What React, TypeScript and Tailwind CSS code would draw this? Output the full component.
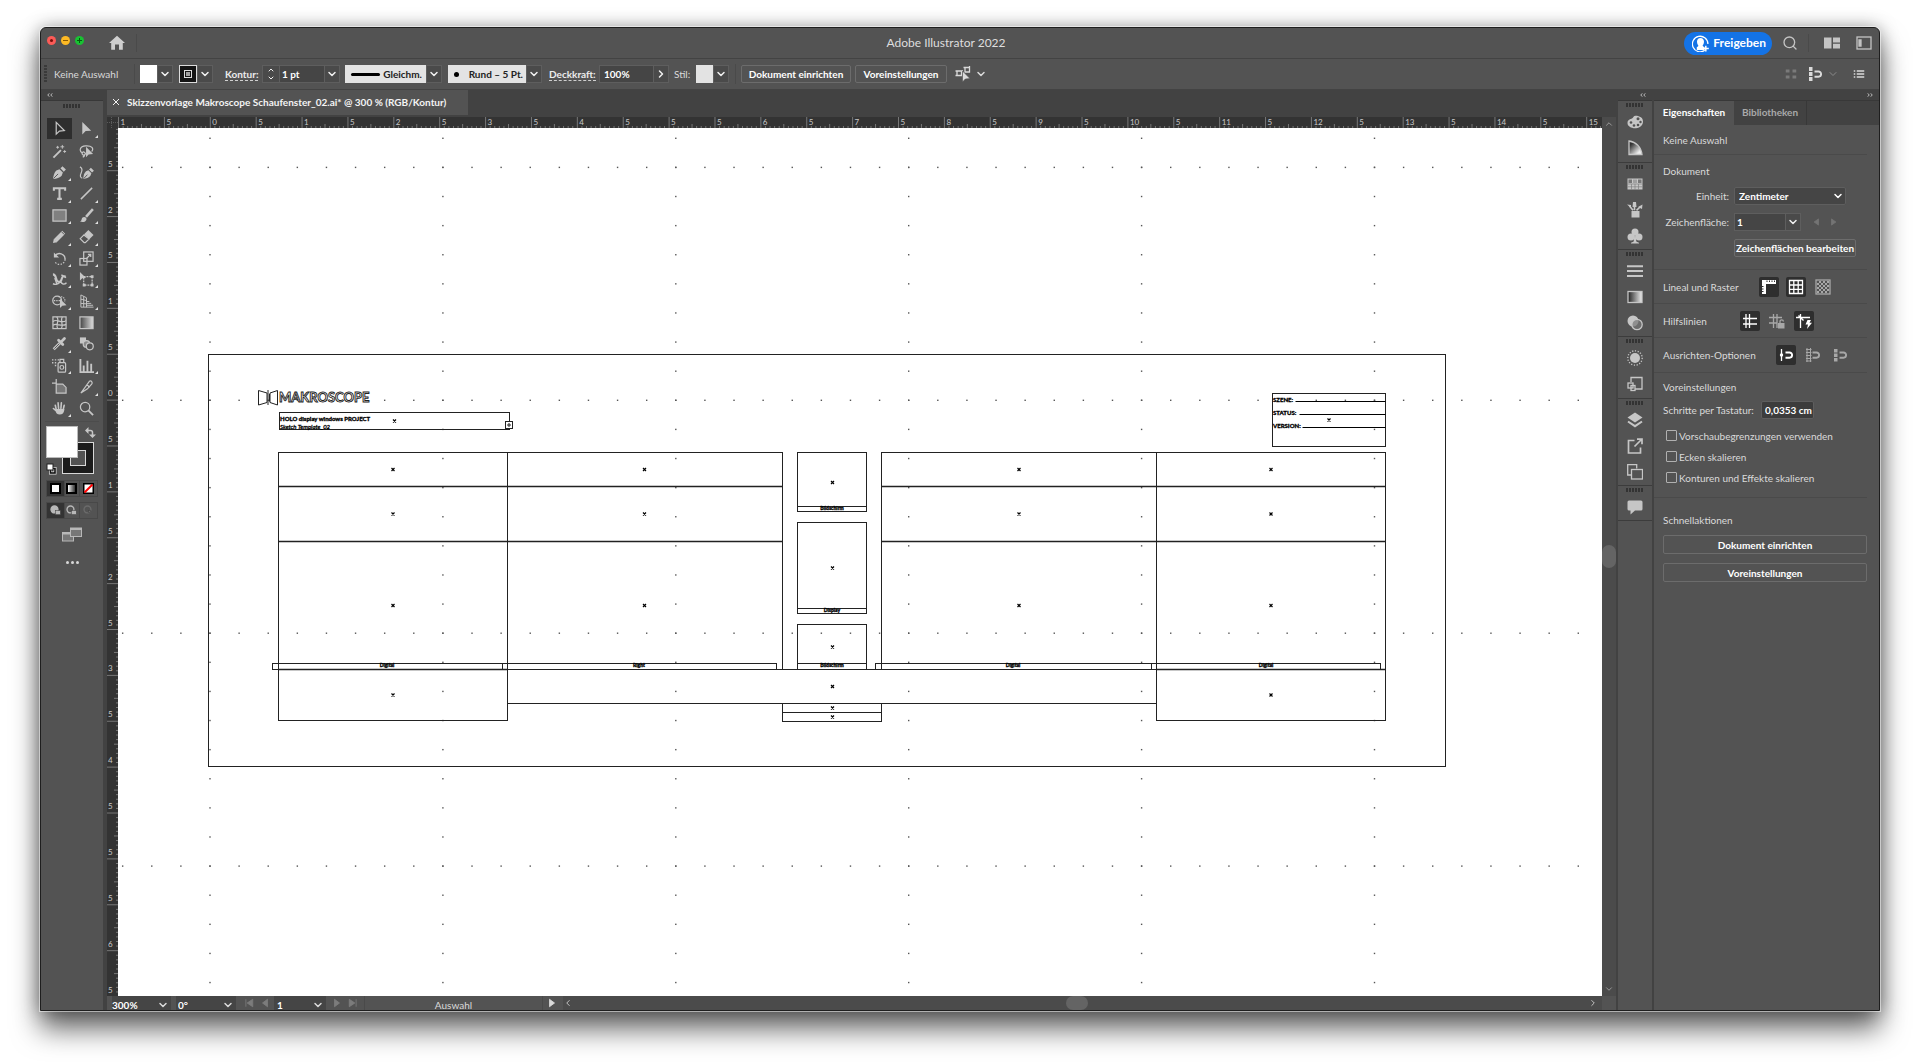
import React from "react";
import clsx from "clsx";
import { ChevronDown, ChevronRight, ChevronLeft, ChevronUp, Search } from "lucide-react";

type IconProps = { children: React.ReactNode; className?: string };

const Icon = ({ children, className }: IconProps) => (
  <svg
    viewBox="0 0 16 16"
    className={clsx("shrink-0", className ?? "size-4")}
    fill="none"
    stroke="currentColor"
    strokeWidth="1.3"
    aria-hidden="true"
  >
    {children}
  </svg>
);

/* ---------- icons ---------- */

const magnet = <path d="M7.500 5.500h4a2.600 2.600 0 0 1 0 5.200h-4" strokeWidth="1.9" />;

const tools: { name: string; more?: boolean; art: React.ReactNode }[] = [
  { name: "Auswahl", art: <path d="M4.5 1.5v12.5l3.4-3.2 5.3-.6z" /> },
  { name: "Direktauswahl", more: true, art: <path d="M3.5 1v13.5l3.6-3.8 5.9-.4z" fill="currentColor" stroke="none" /> },
  {
    name: "Zauberstab",
    art: (
      <>
        <path d="M1.5 14.5 9.5 6.5" strokeWidth="2" />
        <path d="M11 1v4M9 3h4M13.5 6.5v3M12 8h3M6 2v3M4.5 3.5h3" strokeWidth="1" />
      </>
    ),
  },
  {
    name: "Lasso",
    art: (
      <>
        <path d="M3.5 9.5C0 7.5.5 2.500 7 2c7-.5 9 3 6.500 6M3.500 9.500c-1 2 2 3 3 1.500S4.500 7 3.500 9.500zM6 11c.5 1-.5 2.500-2 3" />
        <path d="M7.500 3v11l2.700-2.900 4.800-.4z" fill="currentColor" stroke="none" />
      </>
    ),
  },
  {
    name: "Zeichenstift",
    more: true,
    art: (
      <>
        <path d="M1 15c.6-4 1.500-7.500 3.600-9.200L8 4.500l3.600 3.600-1.300 3.300C8.500 13.500 5 14.500 1 15z" fill="currentColor" stroke="none" />
        <path d="M9 3.500 11.200 1.300l3.600 3.600-2.200 2.200z" fill="currentColor" stroke="none" />
        <path d="M1.500 14.500 6.500 9.500" stroke="#535353" strokeWidth="1" />
      </>
    ),
  },
  {
    name: "Kurvenzeichner",
    art: (
      <>
        <path d="M1 2c3 1.500 2.500 4 1.300 6.500S1 13.500 3.500 14" />
        <path d="M4.500 15c.3-4 1-6.500 3-8.300l2.500-1 3.200 3.200-1 2.600C10.500 13.500 8 14.500 4.500 15zM10.700 4.800l2-2 3.200 3.200-2 2z" fill="currentColor" stroke="none" />
        <path d="M5 14.500 9 10.300" stroke="#535353" strokeWidth="1" />
      </>
    ),
  },
  { name: "Text", more: true, art: <path d="M2 5V2.300h12V5M8 2.300v11.400M5.500 13.700h5" strokeWidth="2.200" /> },
  { name: "Liniensegment", more: true, art: <path d="M2 14 14 2" strokeWidth="1.600" /> },
  { name: "Rechteck", more: true, art: <rect x="1" y="2" width="14" height="12" fill="#808080" /> },
  {
    name: "Pinsel",
    more: true,
    art: (
      <>
        <path d="M1 14.500c2-.5 1.500-2.500 2.500-4 1-1.300 3-1.300 4 0s.5 3-1 3.800-3.500.7-5.500.2z" fill="currentColor" stroke="none" />
        <path d="M7.500 9.500 14.800 1.200" strokeWidth="2.600" />
      </>
    ),
  },
  {
    name: "Buntstift",
    more: true,
    art: (
      <>
        <path d="M3.500 12.500 12.500 3.500" strokeWidth="4.500" />
        <path d="M1 15l1-4.500L5.500 14z" fill="currentColor" stroke="none" />
        <path d="m10 2.800 3.200 3.200" stroke="#535353" strokeWidth="1" />
      </>
    ),
  },
  {
    name: "Radiergummi",
    more: true,
    art: (
      <>
        <path d="M5.500 5.500 10 1l5.500 5.500-4.500 4.500z" fill="currentColor" stroke="none" />
        <path d="m5.300 6.300-4 4 4.200 4.200h1.200l4-3.800z" />
      </>
    ),
  },
  {
    name: "Drehen",
    more: true,
    art: (
      <>
        <path d="M3 5.500a6 6 0 0 1 11 3.500" strokeWidth="1.600" />
        <path d="M14 9A6 6 0 0 1 3 11.500" strokeDasharray="1.500 1.500" />
        <path d="M2 1.500V7h5.500z" fill="currentColor" stroke="none" />
      </>
    ),
  },
  {
    name: "Skalieren",
    more: true,
    art: (
      <>
        <rect x="1" y="8" width="7.500" height="7" />
        <rect x="5" y="1" width="10" height="10" />
        <path d="m8 8 4.500-4.500M9.500 3.500h3v3" />
      </>
    ),
  },
  {
    name: "Breite",
    more: true,
    art: (
      <>
        <path d="M1 2.500c4 0 2.500 6 5 7.500s4-.5 4.500-3S13 4 14.500 5" strokeWidth="2.200" />
        <path d="M1 12.500c4 1.500 7-.5 8-2.500 1.500 3 4 4 6.500 1.500M3 6.500l2.500 7M10 3l5 3" strokeWidth="1.500" />
      </>
    ),
  },
  {
    name: "Frei transformieren",
    more: true,
    art: (
      <>
        <rect x="5" y="5" width="9" height="9" strokeDasharray="2 1" />
        <path d="M1 0v9l2.500-2.300 4-.4zM12.500 3.500h3v3h-3zM12.500 12.500h3v3h-3zM4 12.500h3v3H4z" fill="currentColor" stroke="none" />
      </>
    ),
  },
  {
    name: "Formerstellung",
    more: true,
    art: (
      <>
        <circle cx="5.500" cy="7" r="4.700" />
        <path d="M7 3.200c5-1.200 7.500 1.800 6.500 5.300M2 7h8" strokeDasharray="1.500 1" />
        <path d="M8.500 5v10l2.500-2.600 4.500-.4z" fill="currentColor" stroke="none" />
      </>
    ),
  },
  {
    name: "Perspektivenraster",
    more: true,
    art: <path d="M2 1v13h13.500M2 1l6 3v10M2 5.500l6 1.500M2 10l6 .5M5 2.500V14M8 8h3M8 10h5M8 12h7" strokeWidth="1" />,
  },
  {
    name: "Gitter",
    art: (
      <>
        <rect x="1" y="2" width="14" height="12.500" />
        <path d="M1 7c4-4 9 3 14-1M1 11c4-3 9 2 14-1M5 2c4 4-2 8 1 12.500M11 2c-3 4 2 8-1 12.500" />
      </>
    ),
  },
  {
    name: "Verlauf",
    art: (
      <>
        <defs>
          <linearGradient id="toolGrad">
            <stop offset="0" stopColor="#444" />
            <stop offset="1" stopColor="#ddd" />
          </linearGradient>
        </defs>
        <rect x="1" y="2" width="14" height="12.500" fill="url(#toolGrad)" />
      </>
    ),
  },
  {
    name: "Pipette",
    more: true,
    art: (
      <>
        <path d="M1.800 14.200 8.500 7.500" strokeWidth="3" />
        <path d="M2.500 13.500 8 8" stroke="#535353" strokeWidth="1" />
        <path d="m7 4.500 4.500 4.500M10 6l3.300-3.300" strokeWidth="3" strokeLinecap="round" />
      </>
    ),
  },
  {
    name: "Angleichen",
    art: (
      <>
        <rect x="1" y="1.500" width="6.500" height="6.500" fill="currentColor" stroke="none" />
        <circle cx="8" cy="8.500" r="3.500" fill="#8a8a8a" />
        <circle cx="11.500" cy="11" r="3.700" fill="#535353" />
      </>
    ),
  },
  {
    name: "Symbol aufsprühen",
    more: true,
    art: (
      <>
        <rect x="6.500" y="5" width="8" height="10" rx="1" />
        <path d="M8.500 4.500v-3h4v3" />
        <circle cx="10.500" cy="10" r="2" />
        <path d="M0 2h1.500M3 2h1.500M6 2h1.500M0 5h1.500M3 5h1.500M3 8h1.500" strokeWidth="1.500" />
      </>
    ),
  },
  { name: "Säulendiagramm", more: true, art: <path d="M1.500 1v14H16M5 14V8M9 14V3M13 14V6" strokeWidth="2" /> },
  { name: "Zeichenfläche", art: <path d="M4.500 0v5M0 4.500h4.500M4.500 5.500h7L15 9v6H4.500z" fill="#777" /> },
  {
    name: "Slice",
    more: true,
    art: <path d="M2 15 11 2.500c2-1.500 4 1 2.500 3L9 10.500 2 15zM8.500 6l3 3" />,
  },
  {
    name: "Hand",
    more: true,
    art: (
      <path
        d="M4.500 9 3.500 4.500M7 8 6.500 2M9.500 8 10 2M12 9l1-4.500M4.500 10.500l-3-2.500M4.500 9.500c.5 5.500 7 5.500 7.800 0z"
        strokeWidth="1.700"
        strokeLinecap="round"
        fill="currentColor"
      />
    ),
  },
  {
    name: "Zoom",
    art: (
      <>
        <circle cx="6.500" cy="6.500" r="5" />
        <path d="m10 10 5 5" strokeWidth="2" />
      </>
    ),
  },
];

const dockGroups: { name: string; art: React.ReactNode }[][] = [
  [
    {
      name: "Farbe",
      art: (
        <>
          <path d="M8.500 1.800c-2 0-2 2-3.500 2.700S.5 5.500.5 9s4 5.500 8.500 5.200S16 11 16 7.500 13 1.800 8.500 1.800z" fill="currentColor" stroke="none" />
          <g fill="#535353" stroke="none">
            <circle cx="4" cy="8.500" r="1.300" />
            <circle cx="7" cy="11.500" r="1.300" />
            <circle cx="11" cy="11" r="1.300" />
            <circle cx="13.500" cy="8" r="1.200" />
            <circle cx="11" cy="4.800" r="1.500" />
          </g>
        </>
      ),
    },
    {
      name: "Farbhilfe",
      art: (
        <>
          <defs>
            <linearGradient id="guideGrad" x1="0" y1="0" x2="1" y2="1">
              <stop offset="0.200" stopColor="#333" />
              <stop offset="0.800" stopColor="#eee" />
            </linearGradient>
          </defs>
          <path d="M2 1c7 1 12 6 13 13.500H2z" fill="url(#guideGrad)" />
        </>
      ),
    },
  ],
  [
    {
      name: "Farbfelder",
      art: (
        <>
          <rect x="0.500" y="2.500" width="15" height="11" fill="currentColor" stroke="none" />
          <path d="M1.500 3.500H5V7H1.500zM11 3.500h3.500V7H11z" fill="#777" stroke="none" />
          <path d="M6 3.500h4V7H6z" fill="#a0a0a0" stroke="none" />
          <path d="M.5 8h15M.5 10.800h15M4.500 8v5.500M8 8v5.500M11.500 8v5.500" stroke="#808080" strokeWidth="0.700" />
        </>
      ),
    },
    {
      name: "Pinsel",
      art: (
        <>
          <rect x="4.500" y="9" width="8" height="6.500" fill="currentColor" stroke="none" />
          <path d="M7.500 8.300V1.500M6 8.300 2.500 4M9.500 8.300 13 5" strokeWidth="1.600" />
          <path d="M0 2.500 4 3v3zM11 5l4.500-2.500L15 7zM6 0h3l.5 5h-4z" fill="currentColor" stroke="none" />
        </>
      ),
    },
    {
      name: "Symbole",
      art: (
        <g fill="currentColor" stroke="none">
          <circle cx="8" cy="4" r="3.500" />
          <circle cx="4" cy="9" r="3.500" />
          <circle cx="12" cy="9" r="3.500" />
          <path d="M7.300 7h1.400l.6 6.500 2.700 1.300v.7H4v-.7l2.700-1.300z" />
        </g>
      ),
    },
  ],
  [
    {
      name: "Kontur",
      art: <path d="M0 3.200h16M0 8h16M0 13h16" strokeWidth="2.100" />,
    },
    {
      name: "Verlauf",
      art: (
        <>
          <defs>
            <linearGradient id="dockGrad">
              <stop offset="0" stopColor="#222" />
              <stop offset="1" stopColor="#eee" />
            </linearGradient>
          </defs>
          <rect x="1" y="2.500" width="14" height="11" fill="url(#dockGrad)" />
        </>
      ),
    },
    {
      name: "Transparenz",
      art: (
        <>
          <circle cx="6" cy="6" r="5.500" fill="currentColor" stroke="none" />
          <circle cx="10" cy="9.500" r="5.200" fill="#777" fillOpacity="0.700" />
        </>
      ),
    },
  ],
  [
    {
      name: "Aussehen",
      art: (
        <>
          <circle cx="8" cy="8" r="5" fill="currentColor" stroke="none" />
          <circle cx="8" cy="8" r="7.200" strokeDasharray="1.200 1.600" />
        </>
      ),
    },
    {
      name: "Grafikstile",
      art: (
        <>
          <path d="M4 6V1.500h11v11.500H8" />
          <rect x="1" y="7" width="5" height="5" />
          <rect x="4" y="9.500" width="4" height="5" />
        </>
      ),
    },
  ],
  [
    {
      name: "Ebenen",
      art: (
        <>
          <path d="m8 .5 7.500 5L8 10.500.5 5.500z" fill="currentColor" stroke="none" />
          <path d="m1 9.500 7 4.700 7-4.700" strokeWidth="2" />
        </>
      ),
    },
    {
      name: "Exportieren",
      art: <path d="M7.500 2.500H1.500v12.500h12V9.500M7.500 8.500 14.500 1.500M10 1.200h5v5" strokeWidth="1.700" />,
    },
    {
      name: "Zeichenflächen",
      art: (
        <>
          <path d="M4 11H.7V.7h9V4.500" />
          <rect x="4.500" y="5.500" width="11" height="9.500" />
        </>
      ),
    },
  ],
  [
    {
      name: "Kommentare",
      art: (
        <path
          d="M2 1.500h12a1.500 1.500 0 0 1 1.500 1.500v7a1.500 1.500 0 0 1-1.500 1.500H8L3.500 15.500v-4H2A1.500 1.500 0 0 1 .5 10V3A1.500 1.500 0 0 1 2 1.500z"
          fill="currentColor"
          stroke="none"
        />
      ),
    },
  ],
];

/* ---------- small parts ---------- */

const Grip = () => (
  <div className="h-1 w-[18px] bg-[repeating-linear-gradient(90deg,#333_0_2px,#535353_2px_3px)]" />
);

const DropButton = ({ label, right }: { label: string; right?: boolean }) => (
  <button
    aria-label={label}
    className="flex h-[18px] w-4 shrink-0 items-center justify-center border border-[#5e5e5e] bg-[#4a4a4a] text-[#f0f0f0]"
  >
    {right ? <ChevronRight className="size-3" strokeWidth={3} /> : <ChevronDown className="size-3" strokeWidth={3} />}
  </button>
);

const OutlineButton = ({ children, className }: IconProps) => (
  <button
    className={clsx(
      "flex shrink-0 items-center justify-center rounded-xs border border-[#6c6c6c] font-bold whitespace-nowrap text-white",
      className
    )}
  >
    {children}
  </button>
);

const Divider = () => <div className="mr-3 h-px bg-[#4a4a4a]" />;

const PanelHeader = ({ children, className }: IconProps) => (
  <div
    className={clsx(
      "flex h-[11px] shrink-0 items-center border-b border-[#383838] bg-[#424242] text-[#c8c8c8]",
      className
    )}
  >
    <svg viewBox="0 0 6 4" className="h-1 w-1.5" fill="none" stroke="currentColor" strokeWidth="0.900">
      {children}
    </svg>
  </div>
);

/* ---------- bars ---------- */

const TitleBar = () => (
  <header className="grid h-[31px] shrink-0 grid-cols-[1fr_auto_1fr] items-center border-b border-[#434343]">
    <div className="flex items-center">
      <div className="ml-1.5 flex gap-[5px] self-start pt-0.5">
        <button aria-label="Schließen" className="flex size-[9px] items-center justify-center rounded-full bg-[#fc5b57]">
          <span className="size-[3px] rounded-full bg-[#7a0f0c]" />
        </button>
        <button aria-label="Minimieren" className="flex size-[9px] items-center justify-center rounded-full bg-[#fdb924]">
          <span className="h-px w-[5px] bg-[#8a5a00]" />
        </button>
        <button aria-label="Maximieren" className="flex size-[9px] items-center justify-center rounded-full bg-[#18c232]">
          <svg viewBox="0 0 5 5" className="size-[5px]" stroke="#055c10" fill="none">
            <path d="M2.500 0v5M0 2.500h5" />
          </svg>
        </button>
      </div>
      <button aria-label="Start" className="ml-[25px] text-[#cfcfcf]">
        <Icon>
          <path d="M8 .8 16 8h-2.200v6.800H10V9.500H6v5.300H2.200V8H0z" fill="currentColor" stroke="none" />
        </Icon>
      </button>
      <div className="ml-[11px] h-[18px] w-px bg-[#4a4a4a]" />
    </div>
    <h1 className="pr-7 text-xs text-[#dedede]">Adobe Illustrator 2022</h1>
    <div className="flex items-center justify-end pr-[7px] text-[#c4c4c4]">
      <button className="flex h-[23px] items-center gap-1 rounded-full bg-[#1473e6] pr-1.5 pl-2 text-xs font-bold text-white">
        <Icon className="size-[17px]">
          <path d="M12 14.400A7.300 7.300 0 1 1 15 8.500" strokeWidth="1.200" />
          <path
            d="M8 2.800c2 0 3.300 1.400 3.300 3.500S10 9.700 10 10.200s1 .8 1.800 1.200V14H4.500v-2.500C5.500 11 6 10.700 6 10.200S4.700 8.400 4.700 6.300 6 2.800 8 2.800z"
            fill="currentColor"
            stroke="none"
          />
          <path d="M13 10v5.500M10.300 12.800h5.500" strokeWidth="1.400" />
        </Icon>
        Freigeben
      </button>
      <button aria-label="Suchen" className="ml-2.5">
        <Search className="size-4" />
      </button>
      <div className="ml-2.5 h-[18px] w-px bg-[#4a4a4a]" />
      <button aria-label="Arbeitsbereich" className="ml-[15px]">
        <Icon>
          <path d="M0 2.500h7.500v11H0zM9 2.500h7v5H9zM9 8.800h7v4.700H9z" fill="currentColor" stroke="none" />
        </Icon>
      </button>
      <button aria-label="Dokumente anordnen" className="ml-4">
        <Icon>
          <rect x="1" y="2" width="14" height="12" />
          <path d="M3 5h2v6H3z" fill="currentColor" />
        </Icon>
      </button>
    </div>
  </header>
);

const ControlBar = () => (
  <div className="flex h-[31px] shrink-0 items-center overflow-hidden border-b border-[#434343] text-[#dadada]">
    <div className="ml-[3px] h-[18px] w-[3px] shrink-0 bg-[repeating-linear-gradient(180deg,#3a3a3a_0_2px,#535353_2px_3px)]" />
    <span className="ml-[7px] w-20 shrink-0">Keine Auswahl</span>
    <div className="h-5 w-px shrink-0 bg-[#4a4a4a]" />
    <button aria-label="Fläche" className="ml-[5px] h-[18px] w-[17px] shrink-0 bg-white" />
    <DropButton label="Flächenfarbe" />
    <button
      aria-label="Konturfarbe"
      className="ml-1.5 flex h-[18px] w-[18px] shrink-0 items-center justify-center border border-[#dcdcdc] bg-[#141414]"
    >
      <span className="flex size-2 items-center justify-center border border-[#dcdcdc]">
        <span className="size-1 bg-[#a0a0a0]" />
      </span>
    </button>
    <DropButton label="Konturfarbe wählen" />
    <label htmlFor="stroke" className="ml-3 w-[37px] shrink-0">
      <span className="border-b border-dashed border-[#cfcfcf] font-bold text-[#ececec]">Kontur:</span>
    </label>
    <div className="flex h-[18px] shrink-0 border border-r-0 border-[#5e5e5e] bg-[#454545]">
      <span className="flex w-4 flex-col items-center justify-center bg-[#4a4a4a] text-[#f0f0f0]">
        <ChevronUp className="size-2" strokeWidth={3} />
        <ChevronDown className="size-2" strokeWidth={3} />
      </span>
      <input
        id="stroke"
        defaultValue="1 pt"
        className="w-[45px] border-l border-[#5e5e5e] pl-0.5 text-[10px] font-bold text-white"
      />
    </div>
    <DropButton label="Konturstärke" />
    <button className="ml-[5px] flex h-[18px] w-[81px] shrink-0 items-center justify-between bg-[#e3e3e3] px-1 pl-1.5 font-bold text-[#222]">
      <span className="h-[3px] w-[29px] rounded-full bg-black" />
      Gleichm.
    </button>
    <DropButton label="Breitenprofil" />
    <button className="ml-1.5 flex h-[18px] w-[78px] shrink-0 items-center justify-between bg-[#e3e3e3] pr-[3px] pl-1.5 font-bold text-[#222]">
      <span className="size-[5px] rounded-full bg-black" />
      Rund – 5 Pt.
    </button>
    <DropButton label="Pinseldefinition" />
    <label htmlFor="opacity" className="ml-[7px] w-[50px] shrink-0">
      <span className="border-b border-dashed border-[#cfcfcf] font-bold text-[#ececec]">Deckkraft:</span>
    </label>
    <input
      id="opacity"
      defaultValue="100%"
      className="h-[18px] w-[54px] shrink-0 border border-r-0 border-[#5e5e5e] bg-[#454545] pl-1 font-bold text-white"
    />
    <DropButton label="Deckkraft wählen" right />
    <span className="ml-[5px] w-[22px] shrink-0">Stil:</span>
    <button aria-label="Stil" className="h-[18px] w-[17px] shrink-0 bg-[#e3e3e3]" />
    <DropButton label="Stil wählen" />
    <div className="ml-1.5 h-5 w-px shrink-0 bg-[#4a4a4a]" />
    <OutlineButton className="ml-[5px] h-[18px] w-[110px]">Dokument einrichten</OutlineButton>
    <OutlineButton className="ml-1 h-[18px] w-[92px]">Voreinstellungen</OutlineButton>
    <button aria-label="Ähnliche auswählen" className="ml-2 flex items-center gap-1">
      <Icon>
        <path d="M2 5h4.500v4.500H2zM10 1.500h4.500V6H10zM.5 5h1.500M.5 9.500h1.500M6.500 5H8M8.500 1.500H10M14.500 1.500V0" strokeWidth="1.300" />
        <path d="M7.500 5v11l2.800-3 4.700-.4z" fill="currentColor" stroke="#535353" strokeWidth="0.600" />
      </Icon>
      <ChevronDown className="size-3" strokeWidth={3} />
    </button>
    <div className="ml-auto flex shrink-0 items-center pr-3.5">
      <Icon className="size-3 text-[#7a7a7a]">
        <path d="M1 2h5v4H1zM10 2h5v4h-5zM1 10h5v4H1zM10 10h5v4h-5z" fill="currentColor" stroke="none" />
      </Icon>
      <button aria-label="Ausrichten" className="ml-2.5 flex items-center gap-1">
        <Icon>
          <path d="M2 1h3.500v4H2zM2 6h3.500v4H2zM2 11h3.500v4H2z" fill="currentColor" stroke="none" />
          {magnet}
        </Icon>
        <ChevronDown className="size-3 text-[#8a8a8a]" />
      </button>
      <button aria-label="Bedienfeldmenü" className="ml-3.5">
        <Icon className="size-3">
          <path d="M1 4h2M1 8h2M1 12h2M5 4h10M5 8h10M5 12h10" strokeWidth="1.700" />
        </Icon>
      </button>
    </div>
  </div>
);

/* ---------- tools ---------- */

const ToolPanel = () => (
  <aside className="flex w-[62px] shrink-0 flex-col">
    <PanelHeader className="pl-1.5">
      <path d="M2.500.3.700 2l1.800 1.700M5.500.3 3.700 2l1.800 1.700" />
    </PanelHeader>
    <div className="flex justify-center py-[3px]">
      <Grip />
    </div>
    <div className="mt-1.5 ml-[5px] grid h-[302px] w-[54px] grid-cols-2 text-[#c6c6c6]">
      {tools.map((t, i) => (
        <button
          key={t.name}
          aria-label={t.name}
          className={clsx("relative flex items-center justify-center", i === 0 && "mx-px my-px bg-[#2e2e2e]")}
        >
          <Icon className="size-[15px]">{t.art}</Icon>
          {t.more && (
            <svg viewBox="0 0 3 3" className="absolute right-0.5 bottom-0.5 size-[3px]" fill="#e0e0e0">
              <path d="M3 0v3H0z" />
            </svg>
          )}
        </button>
      ))}
    </div>
    <div className="mx-1 mt-0.5 h-px bg-[#4c4c4c]" />
    <div className="mt-1 ml-[5px] text-[#c6c6c6]">
      <svg viewBox="0 0 52 49" className="h-[49px] w-[52px]" fill="none">
        <rect x="16.500" y="16.500" width="31" height="31" fill="#1c1c1c" stroke="#d8d8d8" />
        <rect x="24.500" y="24.500" width="15" height="15" fill="#535353" stroke="#d8d8d8" />
        <rect x="0.500" y="0.500" width="31" height="31" fill="#fff" stroke="#bbb" />
        <path d="M42 4.500h2.500a2 2 0 0 1 2 2V9" stroke="currentColor" strokeWidth="1.500" />
        <path d="M39 4.500 42.500 1v7zM46.500 12 43 8.500h7z" fill="currentColor" />
        <rect x="4.500" y="42.500" width="4.500" height="4.500" stroke="#e8e8e8" strokeWidth="3" />
        <rect x="4.500" y="42.500" width="4.500" height="4.500" stroke="#111" strokeWidth="1.600" />
        <rect x="1" y="38" width="6" height="6" fill="#fff" stroke="#222" />
      </svg>
    </div>
    <div className="mt-[5px] ml-[5px] grid h-[17px] w-[52px] grid-cols-3 border border-[#484848]">
      <button aria-label="Farbe" className="flex items-center justify-center bg-[#333]">
        <span className="size-[11px] border-2 border-black bg-white" />
      </button>
      <button aria-label="Verlauf" className="flex items-center justify-center border-x border-[#484848]">
        <span className="size-[11px] border-2 border-black bg-linear-to-r from-white to-[#333]" />
      </button>
      <button aria-label="Ohne" className="flex items-center justify-center">
        <svg viewBox="0 0 11 11" className="size-[11px]">
          <rect width="11" height="11" fill="#000" />
          <rect x="1.500" y="1.500" width="8" height="8" fill="#fff" />
          <path d="M1.500 9.500l8-8" stroke="#f00" strokeWidth="2" />
        </svg>
      </button>
    </div>
    <div className="mt-[5px] ml-[5px] grid h-[17px] w-[52px] grid-cols-3 border border-[#484848] text-[#b8b8b8]">
      {["Normal zeichnen", "Dahinter zeichnen", "Innen zeichnen"].map((mode, i) => (
        <button
          key={mode}
          aria-label={mode}
          className={clsx(
            "flex items-center justify-center",
            i === 0 && "bg-[#333]",
            i === 1 && "border-x border-[#484848]",
            i === 2 && "text-[#6b6b6b]"
          )}
        >
          <Icon className="size-[11px]">
            <circle cx="6.500" cy="6.500" r="5" fill={i === 0 ? "currentColor" : "none"} strokeWidth="2" />
            <rect
              x="8"
              y="8"
              width={i === 2 ? 3 : 7}
              height={i === 2 ? 3 : 6}
              fill="currentColor"
              stroke="#444"
              strokeWidth="0.800"
            />
          </Icon>
        </button>
      ))}
    </div>
    <button aria-label="Bildschirmmodus" className="mt-2 self-center text-[#b8b8b8]">
      <svg viewBox="0 0 20 15" className="h-[15px] w-5" fill="#777" stroke="currentColor">
        <rect x="0.500" y="5.500" width="11" height="8.500" />
        <path d="M.5 6.500h11" strokeWidth="2" />
        <rect x="8.500" y="1" width="11" height="8.500" />
        <path d="M8.500 2h11" strokeWidth="2" />
      </svg>
    </button>
    <button aria-label="Symbolleiste bearbeiten" className="mt-[19px] flex justify-center gap-0.5">
      {[0, 1, 2].map((d) => (
        <span key={d} className="size-[3px] rounded-full bg-[#d8d8d8]" />
      ))}
    </button>
  </aside>
);

/* ---------- rulers and canvas ---------- */

const STEP = 45.88;
const range = (from: number, to: number) => Array.from({ length: to - from + 1 }, (_, i) => from + i);
const rulerLabel = (n: number) => (n % 2 ? "5" : String(Math.abs(n / 2)));

const TopRuler = () => (
  <svg className="block h-[11px] w-full shrink-0 bg-[#333]" aria-hidden="true">
    <path d="M4.500 0v11M0 5.500h11" stroke="#5a5a5a" strokeDasharray="1 1" />
    {range(-2, 30).map((n) => {
      const x = 103.3 + n * STEP;
      return (
        <g key={n}>
          <path d={`M${x} 0v11`} stroke="#777" />
          {range(1, 9).map((t) => {
            const tx = x + (t * STEP) / 10;
            return <path key={t} d={`M${tx} ${t === 5 ? 7 : 9}v4`} stroke="#777" />;
          })}
          <text x={x + 2} y="8" fontSize="8" fill="#c8c8c8">
            {rulerLabel(n)}
          </text>
        </g>
      );
    })}
  </svg>
);

const SideRuler = () => (
  <svg className="block h-full w-[11px] bg-[#333]" aria-hidden="true">
    {range(-5, 13).map((n) => {
      const y = 272.1 + n * STEP;
      return (
        <g key={n}>
          <path d={`M0 ${y}h11`} stroke="#777" />
          {range(1, 9).map((t) => {
            const ty = y - (t * STEP) / 10;
            return <path key={t} d={`M${t === 5 ? 7 : 9} ${ty}h4`} stroke="#777" />;
          })}
          <text x="1" y={y - 4} fontSize="8" fill="#c8c8c8">
            {rulerLabel(n)}
          </text>
        </g>
      );
    })}
  </svg>
);

// canvas origin in document space
const OX = 118;
const OY = 128;
const GRID = 232.9;

type Box = [number, number, number, number];

const boxes: Box[] = [
  [208.5, 354.5, 1445.5, 766.5],
  [279.5, 412.5, 509.5, 429.5],
  [1272.5, 393.5, 1385.5, 446.5],
  [278.5, 452.5, 507.5, 720.5],
  [507.5, 452.5, 782.5, 669.5],
  [881.5, 452.5, 1156.5, 669.5],
  [1156.5, 452.5, 1385.5, 720.5],
  [507.5, 669.5, 1156.5, 703.5],
  [782.5, 703.5, 881.5, 712.5],
  [782.5, 712.5, 881.5, 721.5],
  [797.5, 452.5, 866.5, 511.5],
  [797.5, 506.5, 866.5, 511.5],
  [797.5, 522.5, 866.5, 613.5],
  [797.5, 608.5, 866.5, 613.5],
  [797.5, 624.5, 866.5, 669.5],
  [797.5, 663.5, 866.5, 669.5],
  [272.5, 663.5, 502.5, 669.5],
  [502.5, 663.5, 776.5, 669.5],
  [875.5, 663.5, 1151.5, 669.5],
  [1151.5, 663.5, 1380.5, 669.5],
];

const marks: [number, number][] = [
  ...[393, 644.5, 1019, 1271].flatMap((x) => [469.5, 514, 605.5].map((y): [number, number] => [x, y])),
  [393, 695],
  [1271, 695],
  [832.5, 482.5],
  [832.5, 568],
  [832.5, 647],
  [832.5, 686.5],
  [832.5, 708],
  [832.5, 717],
  [394.5, 421],
  [1329, 420],
];

const captions: [number, number, string][] = [
  [387, 667, "Digital"],
  [639, 667, "Right"],
  [1013, 667, "Digital"],
  [1266, 667, "Digital"],
  [832, 510, "Bildschirm"],
  [832, 612, "Display"],
  [832, 667, "Bildschirm"],
];

const Canvas = () => (
  <svg className="block h-full w-full bg-white" role="img" aria-label="Zeichenfläche">
    <g transform={`translate(${-OX} ${-OY})`} fill="none" stroke="#222">
      <g fill="#555" stroke="none">
        {range(0, 5).flatMap((i) =>
          range(-9, 20).map((j) => {
            const x = 210 + i * GRID;
            const y = 400.3 + (j * GRID) / 8;
            return <rect key={`v${i}.${j}`} x={x - 0.7} y={y - 0.7} width="1.400" height="1.400" />;
          })
        )}
        {range(-1, 2).flatMap((i) =>
          range(-3, 47).map((j) => {
            const x = 210 + (j * GRID) / 8;
            const y = 400.3 + i * GRID;
            return <rect key={`h${i}.${j}`} x={x - 0.7} y={y - 0.7} width="1.400" height="1.400" />;
          })
        )}
      </g>
      {boxes.map(([x1, y1, x2, y2]) => (
        <rect key={`${x1}.${y1}.${x2}.${y2}`} x={x1} y={y1} width={x2 - x1} height={y2 - y1} />
      ))}
      <path
        d="M278.500 486.500h504M278.500 541.500h504M881.500 486.500h504M881.500 541.500h504M278.500 669.500h229M1156.500 669.500h229"
        strokeWidth="1.300"
      />
      {marks.map(([x, y]) => (
        <path key={`${x}.${y}`} d={`M${x - 1.5} ${y - 1.5}l3 3m0-3l-3 3`} strokeWidth="1.200" stroke="#000" />
      ))}
      <rect x="505.500" y="421.500" width="7" height="7" fill="#fff" />
      <path d="M507 425h4M509 423v4" />
      <path d="M1295.500 401.500h90M1299.500 414.500h86M1302.500 427.500h83" stroke="#000" />
      {/* logo */}
      <path d="M258.500 390.500 267 393v9.500l-8.500 2.500zM268 390v15M269.500 394v7.500M277.500 390.500 270 393v9.500l7.500 2.500z" />
      <text x="279" y="402" fontSize="13" fontWeight="700" fill="#fff" strokeWidth="0.900">
        MAKROSCOPE
      </text>
      <g fill="#000" stroke="#000" strokeWidth="0.300" fontSize="6" fontWeight="900">
        <text x="280" y="421">HOLO display windows PROJECT</text>
        <text x="280" y="429" fontWeight="400" fontStyle="italic">
          Sketch Template_02
        </text>
        <text x="1273" y="402">SZENE:</text>
        <text x="1273" y="415">STATUS:</text>
        <text x="1273" y="428">VERSION:</text>
        {captions.map(([x, y, s]) => (
          <text key={`${x}.${y}`} x={x} y={y} fontSize="5" textAnchor="middle">
            {s}
          </text>
        ))}
      </g>
    </g>
  </svg>
);

const StatusChevron = () => (
  <span className="flex h-full w-4 items-center justify-center bg-[#454545] pt-1">
    <ChevronDown className="size-3" strokeWidth={3} />
  </span>
);

const StatusBar = () => (
  <footer className="flex h-3.5 shrink-0 items-center bg-[#535353] text-[#dadada]">
    <input aria-label="Zoom" defaultValue="300%" className="ml-[5px] h-full w-[43px] bg-[#454545] pt-1 font-bold text-white" />
    <StatusChevron />
    <input aria-label="Drehung" defaultValue="0°" className="ml-[5px] h-full w-11 bg-[#454545] pt-1 pl-0.5 font-bold text-white" />
    <StatusChevron />
    <div className="ml-2 flex w-[30px] items-center gap-1.5 text-[#7c7c7c]">
      <Icon className="size-2.5">
        <path d="M3 2v12M14 2v12L5 8z" fill="currentColor" />
      </Icon>
      <Icon className="size-2.5">
        <path d="M12 2v12L4 8z" fill="currentColor" />
      </Icon>
    </div>
    <input
      aria-label="Zeichenflächennummer"
      defaultValue="1"
      className="h-full w-9 bg-[#454545] pt-1 pl-[3px] font-bold text-white"
    />
    <StatusChevron />
    <div className="ml-1.5 flex w-8 items-center gap-1.5 text-[#7c7c7c]">
      <Icon className="size-2.5">
        <path d="M4 2v12l8-6z" fill="currentColor" />
      </Icon>
      <Icon className="size-2.5">
        <path d="M13 2v12M2 2v12l9-6z" fill="currentColor" />
      </Icon>
    </div>
    <span className="flex h-full w-[179px] items-center justify-center border-x border-[#4a4a4a] pt-1">Auswahl</span>
    <button aria-label="Statusmenü" className="flex w-[18px] justify-center">
      <Icon className="size-2.5">
        <path d="M4 2v12l8-6z" fill="currentColor" />
      </Icon>
    </button>
    <div className="ml-0.5 flex h-full min-w-0 flex-1 items-center bg-[#4b4b4b]">
      <ChevronLeft className="size-2.5" />
      <div className="flex h-full flex-1 justify-center">
        <span className="mr-2 h-full w-[22px] rounded-full bg-[#646464]" />
      </div>
      <ChevronRight className="mr-1 size-2.5" />
    </div>
    <div className="w-3.5" />
  </footer>
);

const DocumentArea = () => (
  <main className="ml-1 flex min-w-0 flex-1 flex-col">
    <div className="flex h-[27px] shrink-0 bg-[#424242] pb-0.5">
      <div className="flex items-center gap-2 bg-[#535353] pr-[22px] pb-px pl-1.5 font-bold text-[#f4f4f4]">
        <button aria-label="Dokument schließen" className="flex">
          <svg viewBox="0 0 6 6" className="size-1.5" stroke="currentColor" fill="none">
            <path d="m0 0 6 6M6 0 0 6" />
          </svg>
        </button>
        Skizzenvorlage Makroscope Schaufenster_02.ai* @ 300 % (RGB/Kontur)
      </div>
    </div>
    <div className="flex min-h-0 flex-1">
      <div className="flex min-w-0 flex-1 flex-col">
        <TopRuler />
        <div className="flex min-h-0 flex-1 overflow-hidden">
          <div className="w-[11px] shrink-0">
            <SideRuler />
          </div>
          <div className="min-w-0 flex-1">
            <Canvas />
          </div>
        </div>
      </div>
      <div className="flex w-3.5 shrink-0 flex-col items-center justify-between bg-[#4b4b4b] text-[#a8a8a8]">
        <ChevronUp className="mt-0.5 size-2.5" />
        <span className="h-[23px] w-3.5 rounded-full bg-[#646464]" />
        <ChevronDown className="mb-0.5 size-2.5" />
      </div>
    </div>
    <StatusBar />
  </main>
);

/* ---------- right side ---------- */

const Dock = () => (
  <nav className="ml-0.5 flex w-[34px] shrink-0 flex-col">
    <PanelHeader className="justify-end pr-1.5">
      <path d="M2.500.3.700 2l1.800 1.700M5.500.3 3.700 2l1.800 1.700" />
    </PanelHeader>
    {dockGroups.map((group) => (
      <div
        key={group[0].name}
        className={clsx(
          "flex flex-col items-center border-b border-[#3c3c3c] text-[#c6c6c6]",
          group.length === 2 && "pb-px"
        )}
      >
        <div className="flex h-2 items-center">
          <Grip />
        </div>
        {group.map((item) => (
          <button key={item.name} aria-label={item.name} className="flex h-[26px] items-center">
            <Icon>{item.art}</Icon>
          </button>
        ))}
      </div>
    ))}
  </nav>
);

const Toggle = ({ name, on, children }: { name: string; on?: boolean; children: React.ReactNode }) => (
  <button
    aria-label={name}
    aria-pressed={!!on}
    className={clsx("flex size-5 items-center justify-center rounded-xs", on ? "bg-[#2e2e2e] text-white" : "text-[#a8a8a8]")}
  >
    <Icon>{children}</Icon>
  </button>
);

const Properties = () => (
  <aside className="ml-0.5 flex w-[225px] shrink-0 flex-col text-[#dadada]">
    <PanelHeader className="justify-end pr-1.5">
      <path d="M.5.3 2.300 2 .5 3.700M3.500.3 5.300 2 3.500 3.700" />
    </PanelHeader>
    <div className="flex h-6 bg-[#424242] font-bold">
      <button className="w-20 bg-[#535353] pb-0.5 text-white">Eigenschaften</button>
      <button className="w-[73px] border-r border-[#383838] pb-0.5 text-[#a9a9a9]">Bibliotheken</button>
    </div>
    <div className="flex h-[29px] items-center pl-[9px]">Keine Auswahl</div>
    <Divider />

    <section className="h-[114px] pl-[9px]">
      <h2 className="flex h-8 items-center">Dokument</h2>
      <div className="flex h-[18px] items-center">
        <label htmlFor="unit" className="w-[66px] text-right">
          Einheit:
        </label>
        <div className="relative ml-[5px]">
          <select
            id="unit"
            className="block h-[18px] w-28 appearance-none rounded-xs border border-[#5e5e5e] bg-[#454545] pl-1 font-bold text-white"
          >
            <option>Zentimeter</option>
          </select>
          <ChevronDown className="pointer-events-none absolute top-[3px] right-0.5 size-3 text-white" strokeWidth={3} />
        </div>
      </div>
      <div className="mt-2 flex h-[18px] items-center">
        <label htmlFor="artboard" className="w-[66px] text-right">
          Zeichenfläche:
        </label>
        <input
          id="artboard"
          defaultValue="1"
          className="ml-[5px] h-[18px] w-[51px] border border-r-0 border-[#5e5e5e] bg-[#454545] pl-0.5 font-bold text-white"
        />
        <DropButton label="Zeichenfläche wählen" />
        <div className="ml-2.5 flex gap-2 text-[#747474]">
          <Icon className="size-2.5">
            <path d="M12 3v10L5 8z" fill="currentColor" />
          </Icon>
          <Icon className="size-2.5">
            <path d="M4 3v10l7-5z" fill="currentColor" />
          </Icon>
        </div>
      </div>
      <OutlineButton className="mt-2 ml-[71px] h-[18px] w-[122px]">Zeichenflächen bearbeiten</OutlineButton>
    </section>
    <Divider />

    <div className="flex h-[33px] items-center pl-[9px]">
      <span className="w-24">Lineal und Raster</span>
      <div className="flex gap-[7px]">
        <Toggle name="Lineal" on>
          <path d="M1 1h14v4H5v10H1z" fill="currentColor" stroke="none" />
          <path
            d="M6 1.500v1.500M8.500 1.500v1.500M11 1.500v1.500M13.500 1.500v1.500M1 7.500h1.500M1 10h1.500M1 12.500h1.500"
            stroke="#2e2e2e"
            strokeWidth="1"
          />
        </Toggle>
        <Toggle name="Raster" on>
          <path d="M1.500 1.500h13v13h-13zM1.500 6h13M1.500 10.300h13M5.800 1.500v13M10.200 1.500v13" />
        </Toggle>
        <Toggle name="Transparenzraster">
          <rect x="1" y="1" width="14" height="14" />
          <path
            d="M4 2h2v2H4zM8 2h2v2H8zM12 2h2v2h-2zM2 4h2v2H2zM6 4h2v2H6zM10 4h2v2h-2zM4 6h2v2H4zM8 6h2v2H8zM12 6h2v2h-2zM2 8h2v2H2zM6 8h2v2H6zM10 8h2v2h-2zM4 10h2v2H4zM8 10h2v2H8zM12 10h2v2h-2zM2 12h2v2H2zM6 12h2v2H6zM10 12h2v2h-2z"
            fill="currentColor"
            stroke="none"
          />
        </Toggle>
      </div>
    </div>
    <Divider />
    <div className="flex h-[33px] items-center pl-[9px]">
      <span className="w-[77px]">Hilfslinien</span>
      <div className="flex gap-[7px]">
        <Toggle name="Hilfslinien einblenden" on>
          <path d="M4 1v14M7.500 1v14M1 5.500h14M1 11h14" />
        </Toggle>
        <Toggle name="Hilfslinien sperren">
          <path d="M4.500 1v14M8 1v14M0 4.500h13M0 10h8" />
          <path d="M9 10h6.500v5.500H9z" fill="currentColor" stroke="none" />
          <path d="M11 10V8.500a1.700 1.700 0 0 1 3.400 0" />
        </Toggle>
        <Toggle name="Intelligente Hilfslinien" on>
          <path d="M4.500 1v14M0 4.500h14M2.500 2.500l5 5" />
          <path d="M11.500 7h3.500l-1.500 2.800H16L11 16l1-4.500H9.500z" fill="currentColor" stroke="none" />
        </Toggle>
      </div>
    </div>
    <Divider />
    <div className="flex h-[34px] items-center pl-[9px]">
      <span className="w-[113px]">Ausrichten-Optionen</span>
      <div className="flex gap-[7px]">
        <Toggle name="An Punkt ausrichten" on>
          <path d="M3.500 2v12" />
          <circle cx="3.500" cy="8" r="1.700" fill="currentColor" stroke="none" />
          {magnet}
        </Toggle>
        <Toggle name="An Raster ausrichten">
          <path d="M2 1v14M5.500 1v14M1 2.500h5.500M1 5.500h5.500M1 8.500h5.500M1 11.500h5.500M1 14h5.500" strokeWidth="1" />
          {magnet}
        </Toggle>
        <Toggle name="An Pixel ausrichten">
          <path d="M2 2h3.500v3.500H2zM2 6.500h3.500V10H2zM2 11h3.500v3.500H2z" fill="currentColor" stroke="none" />
          {magnet}
        </Toggle>
      </div>
    </div>
    <Divider />

    <section className="h-[124px] pl-[9px]">
      <h2 className="flex h-7 items-center">Voreinstellungen</h2>
      <div className="flex h-[18px] items-center">
        <label htmlFor="step" className="w-[98px]">
          Schritte per Tastatur:
        </label>
        <input
          id="step"
          defaultValue="0,0353 cm"
          className="h-[18px] w-[53px] rounded-xs border border-[#5e5e5e] bg-[#3c3c3c] pl-[3px] font-bold text-white"
        />
      </div>
      <div className="mt-1.5 flex flex-col">
        {["Vorschaubegrenzungen verwenden", "Ecken skalieren", "Konturen und Effekte skalieren"].map((text) => (
          <label key={text} className="flex h-[21px] items-center gap-0.5 pl-[3px]">
            <input type="checkbox" className="size-[11px] appearance-none rounded-[1px] border border-[#b0b0b0]" />
            {text}
          </label>
        ))}
      </div>
    </section>
    <Divider />

    <section className="pr-3 pl-[9px]">
      <h2 className="flex h-[37px] items-center pt-1.5">Schnellaktionen</h2>
      <OutlineButton className="h-[19px] w-full">Dokument einrichten</OutlineButton>
      <OutlineButton className="mt-[9px] h-[19px] w-full">Voreinstellungen</OutlineButton>
    </section>
  </aside>
);

const App = () => {
  return (
    <div className="flex min-h-screen flex-col bg-white px-10 pt-[27px] pb-[53px] font-['Lato',sans-serif] text-[10px] leading-[14px]">
      <div className="flex flex-1 flex-col overflow-hidden rounded-t-md border border-[#1e1e1e] bg-[#535353] shadow-[0_0_0_1px_rgba(255,255,255,0.5),0_18px_28px_rgba(0,0,0,0.6),0_0_18px_rgba(0,0,0,0.35)]">
        <TitleBar />
        <ControlBar />
        <div className="flex flex-1 bg-[#424242] *:bg-[#535353]">
          <ToolPanel />
          <DocumentArea />
          <Dock />
          <Properties />
        </div>
      </div>
    </div>
  );
};

export default App;
